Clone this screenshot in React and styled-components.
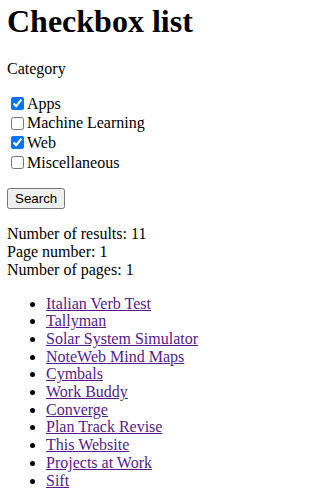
import React, { useState } from "react";
import styled, { createGlobalStyle } from "styled-components";

const GlobalStyle = createGlobalStyle`
  body {
    margin: 3px 7px;
    font-family: "Liberation Serif", "Times New Roman", serif;
    font-size: 16px;
    line-height: 17.7px;
    color: #000;
    background: #fff;
  }
`;

const Title = styled.h1`
  font-size: 32px;
  line-height: 36px;
  font-weight: bold;
  margin: 0 0 21px;
`;

const Para = styled.p`
  margin: 16px 0;
`;

const CheckGroup = styled.div`
  margin: 16px 0;
`;

const CheckRow = styled.div`
  display: flex;
  align-items: center;
  height: 19.7px;
`;

const Box = styled.input`
  width: 13px;
  height: 13px;
  margin: 0 3px 0 4px;
  accent-color: #0075ff;
`;

const Label = styled.label``;

const ButtonRow = styled.p`
  margin: 16px 0;
  line-height: normal;
`;

const Button = styled.button`
  font-family: "Liberation Sans", Arial, sans-serif;
  font-size: 13.33px;
  height: 21px;
  padding: 0 6px;
`;

const List = styled.ul`
  margin: 16px 0;
  padding-left: 39px;
`;

const Link = styled.a`
  color: #551a8b;
  text-decoration: underline;
`;

const categories = [
  { id: "apps", name: "Apps", checked: true },
  { id: "ml", name: "Machine Learning", checked: false },
  { id: "web", name: "Web", checked: true },
  { id: "misc", name: "Miscellaneous", checked: false },
];

const results = [
  "Italian Verb Test",
  "Tallyman",
  "Solar System Simulator",
  "NoteWeb Mind Maps",
  "Cymbals",
  "Work Buddy",
  "Converge",
  "Plan Track Revise",
  "This Website",
  "Projects at Work",
  "Sift",
];

const App = () => {
  const [checked, setChecked] = useState(
    Object.fromEntries(categories.map((c) => [c.id, c.checked]))
  );

  return (
    <>
      <GlobalStyle />
      <Title>Checkbox list</Title>
      <form onSubmit={(e) => e.preventDefault()}>
        <Para>Category</Para>
        <CheckGroup>
          {categories.map((c) => (
            <CheckRow key={c.id}>
              <Box
                type="checkbox"
                id={c.id}
                checked={checked[c.id]}
                onChange={() =>
                  setChecked({ ...checked, [c.id]: !checked[c.id] })
                }
              />
              <Label htmlFor={c.id}>{c.name}</Label>
            </CheckRow>
          ))}
        </CheckGroup>
        <ButtonRow>
          <Button type="submit">Search</Button>
        </ButtonRow>
      </form>
      <Para>
        Number of results: 11
        <br />
        Page number: 1
        <br />
        Number of pages: 1
      </Para>
      <List>
        {results.map((r) => (
          <li key={r}>
            <Link href="#">{r}</Link>
          </li>
        ))}
      </List>
    </>
  );
};

export default App;
